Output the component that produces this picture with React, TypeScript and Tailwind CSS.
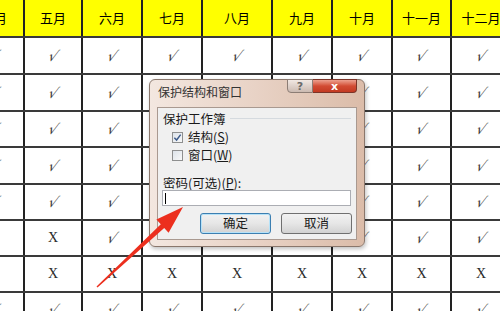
import React from 'react';

const months = ['四月', '五月', '六月', '七月', '八月', '九月', '十月', '十一月', '十二月'];

// v = check, x = cross, '' = empty
const rows: { h: string; cells: string[] }[] = [
  { h: 'h-[37px]', cells: ['v', 'v', 'v', 'v', 'v', 'v', 'v', 'v', 'v'] },
  { h: 'h-[37px]', cells: ['v', 'v', 'v', 'v', 'v', 'v', 'v', 'v', 'v'] },
  { h: 'h-[36px]', cells: ['v', 'v', 'v', 'v', 'v', 'v', 'v', 'v', 'v'] },
  { h: 'h-[37px]', cells: ['v', 'v', 'v', 'v', 'v', 'v', 'v', 'v', 'v'] },
  { h: 'h-[36px]', cells: ['v', 'v', 'v', 'v', 'v', 'v', 'v', 'v', 'v'] },
  { h: 'h-[36px]', cells: ['x', 'x', 'v', 'v', 'v', 'v', 'v', 'v', 'v'] },
  { h: 'h-[36px]', cells: ['x', 'x', 'x', 'x', 'x', 'x', 'x', 'x', 'x'] },
  { h: 'h-[36px]', cells: ['v', 'v', 'v', 'v', 'v', 'v', 'v', 'v', 'v'] },
];

const colW = ['w-[60px]', 'w-[58px]', 'w-[60px]', 'w-[60px]', 'w-[70px]', 'w-[60px]', 'w-[60px]', 'w-[59px]', 'w-[60px]'];

function Mark({ kind }: { kind: string }) {
  if (kind === 'v')
    return (
      <span className="inline-block -skew-x-[22deg] text-[14px] text-[#3d3d3d] font-['DejaVu_Sans',sans-serif] leading-none">
        √
      </span>
    );
  if (kind === 'x')
    return <span className="text-[14px] text-[#2a2a2a] font-['Liberation_Serif',serif] leading-none">X</span>;
  return null;
}

function Sheet() {
  return (
    <div className="-ml-[35px] flex flex-col">
      <div className="flex h-[38px] bg-[#ffff00] border-b-2 border-[#3a3a3a]">
        {months.map((m, i) => (
          <div
            key={m}
            className={`${colW[i]} shrink-0 flex items-center justify-center border-r-2 border-[#222] text-[13px] text-black font-['Noto_Sans_CJK_SC',sans-serif]`}
          >
            {m}
          </div>
        ))}
      </div>
      {rows.map((r, ri) => (
        <div key={ri} className={`flex ${r.h} bg-white border-b-2 border-[#3a3a3a]`}>
          {r.cells.map((c, ci) => (
            <div key={ci} className={`${colW[ci]} shrink-0 flex items-center justify-center border-r-2 border-[#222]`}>
              <Mark kind={c} />
            </div>
          ))}
        </div>
      ))}
    </div>
  );
}

function Dialog() {
  return (
    <div className="absolute left-[149px] top-[79px] w-[216px] h-[168px] rounded-[6px] border border-[#8a776c] bg-gradient-to-r from-[#f3e7e0] via-[#e8d2c5] to-[#dbbca9] shadow-[1px_2px_4px_rgba(0,0,0,0.25)] flex flex-col font-['Noto_Sans_CJK_SC',sans-serif]">
      <div className="h-[27px] pl-[8px] pt-[4px] text-[12px] leading-[16px] text-[#333]">保护结构和窗口</div>
      <div className="absolute right-[7px] -top-px flex h-[14px]">
        <div className="w-[26px] h-full flex items-center justify-center border border-[#8c7d75] rounded-bl-[4px] bg-gradient-to-b from-[#f1e8e3] to-[#cbbab1] text-[11px] font-bold text-[#6a6a6a] leading-none font-['DejaVu_Sans',sans-serif]">
          ?
        </div>
        <div className="w-[44px] h-full flex items-center justify-center border border-l-0 border-[#7b3428] rounded-br-[4px] bg-gradient-to-b from-[#eba08f] via-[#d24b33] to-[#c33a22] text-[11px] font-bold text-white leading-none font-['DejaVu_Sans',sans-serif]">
          x
        </div>
      </div>
      <div className="mx-[7px] h-[133px] border border-[#a99990] bg-[#f0f0f0] flex flex-col text-[12.5px] text-[#1a1a1a]">
        <div className="mt-[3px] pl-[5px] pr-[5px] flex items-center gap-[4px] h-[15px] leading-[15px]">
          <span>保护工作簿</span>
          <div className="flex-1 border-t border-[#d5dadf]" />
        </div>
        <div className="mt-[3px] pl-[14px] flex items-center gap-[5px] h-[16px] leading-[16px]">
          <div className="w-[11px] h-[11px] border border-[#8e8f8f] bg-gradient-to-br from-[#dde3ea] to-[#f8f8f8] flex items-center justify-center">
            <svg viewBox="0 0 10 10" className="w-[9px] h-[9px]">
              <path d="M1.5 5.2 L4 7.8 L8.5 1.8" fill="none" stroke="#3c5a8a" strokeWidth="1.6" />
            </svg>
          </div>
          <span>
            结构(<span className="underline">S</span>)
          </span>
        </div>
        <div className="mt-[2px] pl-[14px] flex items-center gap-[5px] h-[16px] leading-[16px]">
          <div className="w-[11px] h-[11px] border border-[#8e8f8f] bg-gradient-to-br from-[#dde3ea] to-[#f8f8f8]" />
          <span>
            窗口(<span className="underline">W</span>)
          </span>
        </div>
        <div className="mt-[13px] pl-[5px] h-[14px] leading-[14px]">
          密码(可选)(<span className="underline">P</span>):
        </div>
        <div className="ml-[4px] mr-[5px] h-[16px] border border-[#abadb3] bg-white flex items-center pl-[2px]">
          <div className="w-px h-[11px] bg-black" />
        </div>
        <div className="mt-[7px] ml-[42px] flex gap-[10px]">
          <div className="w-[71px] h-[21px] rounded-[3px] border border-[#3c7fb1] bg-gradient-to-b from-[#f2f2f2] via-[#e6e6e6] to-[#d2d2d2] shadow-[inset_0_0_0_1px_#b6e2f8] flex items-center justify-center leading-none">
            确定
          </div>
          <div className="w-[71px] h-[21px] rounded-[3px] border border-[#707070] bg-gradient-to-b from-[#f2f2f2] via-[#e6e6e6] to-[#d2d2d2] flex items-center justify-center leading-none">
            取消
          </div>
        </div>
      </div>
    </div>
  );
}

export default function App() {
  return (
    <div className="relative w-[500px] h-[311px] overflow-hidden bg-white">
      <Sheet />
      <Dialog />
      <svg className="absolute inset-0 pointer-events-none" width="500" height="311" viewBox="0 0 500 311">
        <polygon
          points="183,207 168.6,232.7 164.2,227.9 97.5,287.6 96.5,286.4 160.8,224.3 156.4,219.5"
          fill="#ec2f1e"
        />
      </svg>
    </div>
  );
}
